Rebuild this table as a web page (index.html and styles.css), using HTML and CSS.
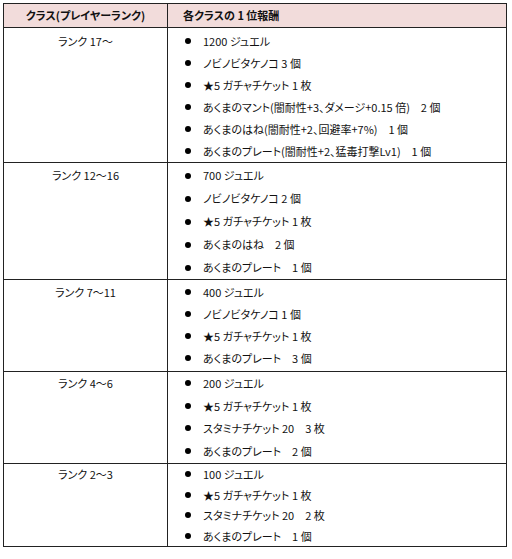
FILE: index.html
```html
<!DOCTYPE html>
<html lang="ja">
<head>
<meta charset="utf-8">
<link rel="stylesheet" href="styles.css">
</head>
<body>
<table class="rewards">
  <thead>
    <tr>
      <th class="c-class">クラス(プレイヤーランク)</th>
      <th class="c-reward">各クラスの 1 位報酬</th>
    </tr>
  </thead>
  <tbody>
    <tr class="r1">
      <td class="rank">ランク 17〜</td>
      <td class="items">
        <ul>
          <li>1200 ジュエル</li>
          <li>ノビノビタケノコ 3 個</li>
          <li>★5 ガチャチケット 1 枚</li>
          <li>あくまのマント(闇耐性+3、ダメージ+0.15 倍)　2 個</li>
          <li>あくまのはね(闇耐性+2、回避率+7%)　1 個</li>
          <li>あくまのプレート(闇耐性+2、猛毒打撃Lv1)　1 個</li>
        </ul>
      </td>
    </tr>
    <tr class="r2">
      <td class="rank">ランク 12〜16</td>
      <td class="items">
        <ul>
          <li>700 ジュエル</li>
          <li>ノビノビタケノコ 2 個</li>
          <li>★5 ガチャチケット 1 枚</li>
          <li>あくまのはね　2 個</li>
          <li>あくまのプレート　1 個</li>
        </ul>
      </td>
    </tr>
    <tr class="r3">
      <td class="rank">ランク 7〜11</td>
      <td class="items">
        <ul>
          <li>400 ジュエル</li>
          <li>ノビノビタケノコ 1 個</li>
          <li>★5 ガチャチケット 1 枚</li>
          <li>あくまのプレート　3 個</li>
        </ul>
      </td>
    </tr>
    <tr class="r4">
      <td class="rank">ランク 4〜6</td>
      <td class="items">
        <ul>
          <li>200 ジュエル</li>
          <li>★5 ガチャチケット 1 枚</li>
          <li>スタミナチケット 20　3 枚</li>
          <li>あくまのプレート　2 個</li>
        </ul>
      </td>
    </tr>
    <tr class="r5">
      <td class="rank">ランク 2〜3</td>
      <td class="items">
        <ul>
          <li>100 ジュエル</li>
          <li>★5 ガチャチケット 1 枚</li>
          <li>スタミナチケット 20　2 枚</li>
          <li>あくまのプレート　1 個</li>
        </ul>
      </td>
    </tr>
  </tbody>
</table>
</body>
</html>
```
FILE: styles.css
```css
html, body {
  margin: 0;
  padding: 0;
  background: #fff;
}
body {
  padding: 3px 0 0 3px;
  font-family: "Noto Sans CJK JP", "Noto Sans", sans-serif;
  font-size: 11px;
  font-feature-settings: "palt";
  color: #111;
}
.rewards {
  border-collapse: collapse;
  width: 504px;
  table-layout: fixed;
}
.rewards th,
.rewards td {
  border: 1px solid #222;
  padding: 0;
}
.rewards thead th {
  background: #f2dcdb;
  height: 23px;
  font-weight: bold;
  line-height: 23px;
}
.c-class {
  width: 163px;
  text-align: center;
}
.c-reward {
  text-align: left;
  padding-left: 15px !important;
}
.rank {
  text-align: center;
  vertical-align: top;
}
.items {
  vertical-align: top;
}
.items ul {
  list-style: none;
  margin: 0;
  padding: 0 0 0 17px;
}
.items li {
  position: relative;
  padding-left: 18px;
  white-space: nowrap;
}
.items li::before {
  content: "";
  position: absolute;
  left: 0;
  top: 50%;
  width: 6px;
  height: 6px;
  margin-top: -3px;
  border-radius: 50%;
  background: #000;
}
.r1 td { padding-top: 2px; line-height: 22px; }
.r2 td { padding-top: 1px; line-height: 23px; }
.r3 td { padding-top: 1px; padding-bottom: 2px; line-height: 22px; }
.r4 td { padding-top: 0; padding-bottom: 1px; line-height: 22.5px; }
.r5 td { padding-top: 0; line-height: 20.5px; }
```
